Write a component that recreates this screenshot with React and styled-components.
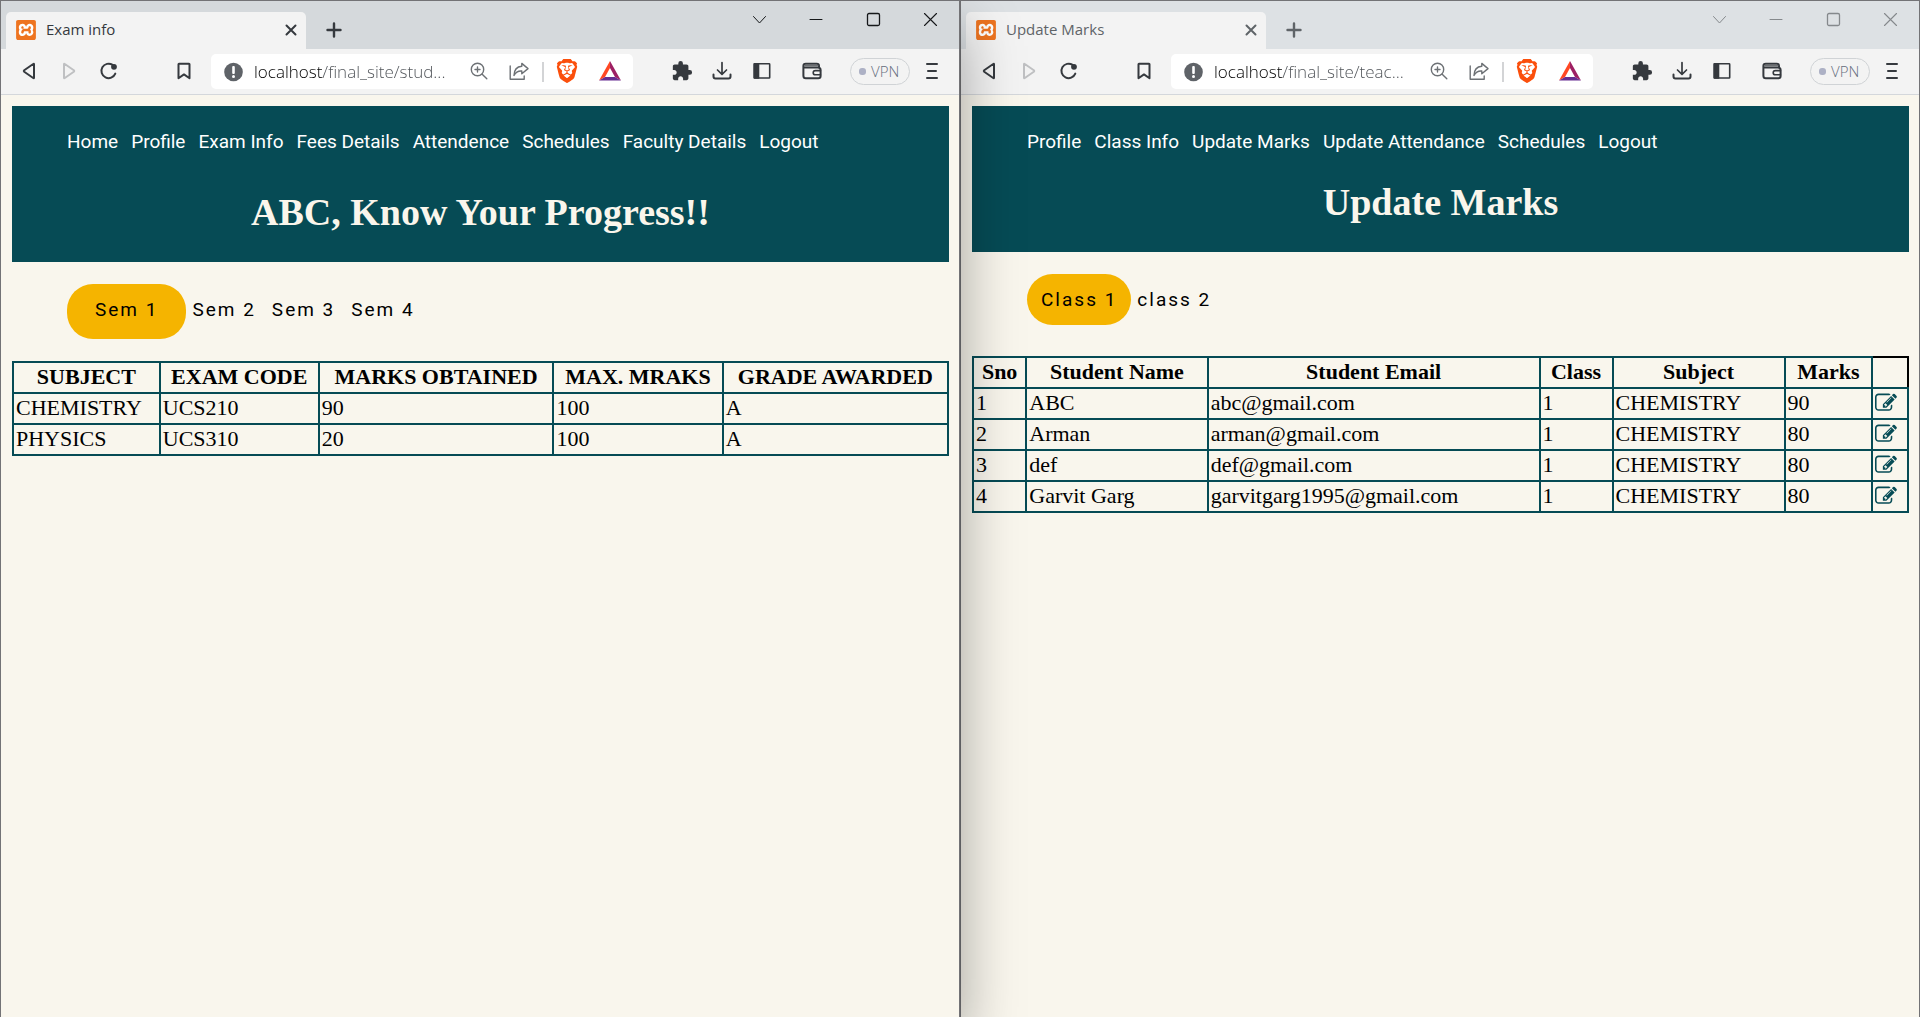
import React from 'react';
import styled, { createGlobalStyle, css } from 'styled-components';
import { SiBrave, SiXampp } from 'react-icons/si';
import { MdExtension } from 'react-icons/md';

const teal = '#064b55';
const cream = '#f9f6ed';
const ink = '#35393e';
const uiFont = '"Open Sans", "Noto Sans", sans-serif';
const serif = '"Liberation Serif", "Times New Roman", serif';

const GlobalStyle = createGlobalStyle`
  *, *::before, *::after { box-sizing: border-box; }
  body { margin: 0; background: ${cream}; font-family: ${serif}; }
  button { margin: 0; padding: 0; border: 0; background: none; color: inherit; font: inherit; cursor: pointer; }
  svg { display: block; flex: none; }
`;

const Desktop = styled.div`
  display: grid;
  grid-template-columns: 1fr 1fr;
  min-height: 100vh;
  overflow: hidden;
`;

const Window = styled.section`
  position: relative;
  z-index: ${(p) => (p.$focused ? 1 : 0)};
  display: flex;
  flex-direction: column;
  min-width: 0;
  border: 1px solid #737376;
  border-bottom: 0;
  background: ${cream};
  box-shadow: ${(p) => (p.$focused ? '0 26px 56px rgba(0, 0, 0, 0.36)' : 'none')};
`;

const TabStrip = styled.div`
  display: flex;
  align-items: flex-end;
  height: 48px;
  padding-left: 5px;
  background: ${(p) => (p.$focused ? '#d5d9dc' : '#dde1e4')};
  color: ${(p) => (p.$focused ? ink : '#5f6468')};
  font-family: ${uiFont};
`;

const BrowserTab = styled.div`
  display: flex;
  align-items: center;
  width: 300px;
  height: 37px;
  padding: 0 5px 1px 10px;
  border-radius: 5px 5px 0 0;
  background: #f3f3f3;
`;

const Favicon = styled.span`
  display: block;
  border-radius: 3px;
  background: #fff;
  color: #ee7420;
`;

const TabTitle = styled.span`
  flex: 1;
  padding: 0 0 2px 10px;
  font-size: 15px;
  line-height: 20px;
`;

const IconButton = styled.button`
  && {
    display: flex;
    flex: none;
    align-items: center;
    justify-content: center;
    width: ${(p) => p.$width || 40}px;
    height: ${(p) => p.$height || 35}px;
    padding-bottom: ${(p) => (p.$height ? 0 : 1)}px;
    color: ${(p) => p.$color || 'inherit'};
  }
`;

const NewTabButton = styled(IconButton)`
  && {
    margin-left: 14px;
  }
`;

const WindowControls = styled.div`
  display: flex;
  align-self: flex-start;
  margin-left: auto;
  color: ${(p) => (p.$focused ? '#16181a' : '#85898c')};
`;

const Toolbar = styled.div`
  display: flex;
  align-items: center;
  height: 46px;
  padding: 0 12px 0 8px;
  border-bottom: 1px solid #d4d7db;
  background: #f3f3f3;
  color: ${ink};
  font-family: ${uiFont};
`;

const NavButtons = styled.div`
  display: flex;
  margin-right: 35px;
`;

const AddressBar = styled.div`
  display: flex;
  flex: 1;
  align-items: center;
  min-width: 0;
  height: 35px;
  margin: 0 29px 0 7px;
  padding: 0 3px 0 13px;
  border-radius: 5px;
  background: #fff;
  color: #6d7175;
`;

const AddressInput = styled.input`
  flex: 1;
  width: 0;
  min-width: 0;
  margin: 0 0 0 10px;
  padding: 0;
  border: 0;
  outline: 0;
  color: #4c5055;
  font-family: ${uiFont};
  font-size: 17px;
  font-weight: 300;
  line-height: 24px;
  background: linear-gradient(to right, #000 69px, #4c5055 69px);
  background-clip: text;
  -webkit-background-clip: text;
  -webkit-text-fill-color: transparent;
`;

const Divider = styled.span`
  width: 2px;
  height: 20px;
  margin: 0 3px;
  background: #d3d4d6;
`;

const ExtensionGroup = styled.div`
  display: flex;
  gap: 3px;
`;

const ToolGroup = styled.div`
  display: flex;
  margin-right: 10px;
`;

const VpnButton = styled.button`
  && {
    display: flex;
    align-items: center;
    gap: 5px;
    width: 60px;
    height: 27px;
    margin: 0 7px 0 18px;
    padding: 0 0 1px 8px;
    border: 1px solid #d0d3d6;
    border-radius: 14px;
    color: #666e7e;
    font-size: 15px;
    font-weight: 300;
    line-height: 20px;
  }
`;

const VpnDot = styled.span`
  width: 7px;
  height: 7px;
  border-radius: 3px;
  background: #adb1c5;
`;

const Page = styled.main`
  flex: 1;
  padding: 11px 10px 0 11px;
`;

const Banner = styled.header`
  padding: 21px 55px 28px;
  background: ${teal};
`;

const SiteNav = styled.nav`
  display: flex;
  gap: 13px;
  font-family: Roboto, sans-serif;
  font-size: 19px;
  line-height: 30px;
  white-space: nowrap;
`;

const NavLink = styled.a`
  color: #fff;
  text-decoration: none;
`;

const Title = styled.h1`
  margin: ${(p) => p.$space}px 0 0;
  color: #faf6ec;
  font-size: 38px;
  font-weight: 700;
  line-height: 44px;
  text-align: center;
`;

const GroupTabs = styled.div`
  display: flex;
  align-items: baseline;
  gap: 6px;
  padding: 22px 55px ${(p) => p.$below}px;
  font-family: Roboto, sans-serif;
  font-size: 19px;
  line-height: 22px;
  letter-spacing: 2px;
  color: #000;
`;

const GroupTab = styled.button`
  && {
    letter-spacing: inherit;
    ${(p) =>
      p.$active
        ? css`
            padding: ${p.$roomy ? '15px 28px 18px' : '15px 14px 14px'};
            border-radius: 26px;
            background: #f5b400;
          `
        : css`
            padding: 0 10px 0 0;
          `}
  }
`;

const DataTable = styled.table`
  width: 100%;
  border-collapse: collapse;
  table-layout: fixed;
  color: #000;
  font-size: 22px;
  line-height: 27px;
  white-space: nowrap;

  th,
  td {
    padding: 0 2px 2px;
    border: 2px solid ${teal};
  }
  td {
    text-align: left;
  }
`;

const Col = styled.col`
  width: ${(p) => p.$share}%;
`;

const BlankHead = styled.td`
  && {
    border-top-color: #000;
    border-right-color: #000;
  }
`;

const EditLink = styled.a`
  display: block;
  width: 22px;
  color: ${teal};
`;

const Stroke = ({ size = 20, width = 2, children }) => (
  <svg
    width={size}
    height={size}
    viewBox={`0 0 ${size} ${size}`}
    fill="none"
    stroke="currentColor"
    strokeWidth={width}
    strokeLinecap="round"
    strokeLinejoin="round"
    aria-hidden="true"
  >
    {children}
  </svg>
);

const InfoIcon = () => (
  <svg width="20" height="20" viewBox="0 0 20 20" aria-hidden="true">
    <circle cx="9.5" cy="10" r="9.3" fill="#5f6368" />
    <rect x="8.2" y="4" width="2.6" height="8" rx="1" fill="#fff" />
    <circle cx="9.5" cy="14.6" r="1.5" fill="#fff" />
  </svg>
);

const BatIcon = () => (
  <svg width="22" height="20" viewBox="0 0 22 20" aria-hidden="true">
    <path d="M11 0L0 19.5L6 16L11 7Z" fill="#ff4724" />
    <path d="M11 0L22 19.5L16 16L11 7Z" fill="#9e1f63" />
    <path d="M0 19.5L6 16H16L22 19.5Z" fill="#662d91" />
  </svg>
);

const EditIcon = () => (
  <svg width="22" height="22" viewBox="0 0 1792 1792" fill="currentColor" aria-hidden="true">
    <path d="M888 1184l116-116-152-152-116 116v56h96v96h56zm440-720q-16-16-33 1l-350 350q-17 17-1 33t33-1l350-350q17-17 1-33zm80 594v190q0 119-84.5 203.5t-203.5 84.5h-832q-119 0-203.5-84.5t-84.5-203.5v-832q0-119 84.5-203.5t203.5-84.5h832q63 0 117 25 15 7 18 23 3 17-9 29l-49 49q-14 14-32 8-23-6-45-6h-832q-66 0-113 47t-47 113v832q0 66 47 113t113 47h832q66 0 113-47t47-113v-126q0-13 9-22l64-64q15-15 35-7t20 29zm-96-738l288 288-672 672h-288v-288zm444 132l-92 92-288-288 92-92q28-28 68-28t68 28l152 152q28 28 28 68t-28 68z" />
  </svg>
);

function BrowserWindow({ focused, title, url, children }) {
  return (
    <Window $focused={focused} aria-label={title}>
      <TabStrip $focused={focused}>
        <BrowserTab>
          <Favicon>
            <SiXampp size={20} />
          </Favicon>
          <TabTitle>{title}</TabTitle>
          <IconButton $width={20} $height={20} aria-label="Close tab">
            <Stroke size={12}>
              <path d="M1.5 1.5L10.5 10.5M10.5 1.5L1.5 10.5" />
            </Stroke>
          </IconButton>
        </BrowserTab>
        <NewTabButton $width={28} $height={38} aria-label="New tab">
          <Stroke size={16} width={2.4}>
            <path d="M8 1.5V14.5M1.5 8H14.5" />
          </Stroke>
        </NewTabButton>
        <WindowControls $focused={focused}>
          <IconButton $width={57} $height={37} aria-label="Search tabs">
            <Stroke size={15} width={1}>
              <path d="M1.5 4.5L7.5 11L13.5 4.5" />
            </Stroke>
          </IconButton>
          <IconButton $width={57} $height={37} aria-label="Minimize">
            <Stroke size={15} width={1}>
              <path d="M1 7.5H13" />
            </Stroke>
          </IconButton>
          <IconButton $width={57} $height={37} aria-label="Maximize">
            <Stroke size={15} width={1.3}>
              <rect x="1.5" y="1.5" width="12" height="12" rx="1.5" />
            </Stroke>
          </IconButton>
          <IconButton $width={57} $height={37} aria-label="Close">
            <Stroke size={15} width={1.1}>
              <path d="M1.5 1.5L13.5 13.5M13.5 1.5L1.5 13.5" />
            </Stroke>
          </IconButton>
        </WindowControls>
      </TabStrip>

      <Toolbar>
        <NavButtons>
          <IconButton aria-label="Back">
            <Stroke>
              <path d="M15 3.2V16.8Q15 17.6 14.2 17L5.2 10.8Q4.4 10 5.2 9.2L14.2 3Q15 2.4 15 3.2Z" />
            </Stroke>
          </IconButton>
          <IconButton aria-label="Forward" $color="#bfc0c2">
            <Stroke>
              <path d="M5 3.2V16.8Q5 17.6 5.8 17L14.8 10.8Q15.6 10 14.8 9.2L5.8 3Q5 2.4 5 3.2Z" />
            </Stroke>
          </IconButton>
          <IconButton aria-label="Reload">
            <Stroke>
              <path d="M13.6 3.9A7.2 7.2 0 1 0 16.3 12.6" />
              <circle cx="15" cy="5.8" r="1.9" fill="currentColor" />
            </Stroke>
          </IconButton>
        </NavButtons>
        <IconButton aria-label="Bookmark">
          <Stroke>
            <path d="M5 2.8H15Q15.5 2.8 15.5 3.3V17.2L10 13.4L4.5 17.2V3.3Q4.5 2.8 5 2.8Z" />
          </Stroke>
        </IconButton>
        <AddressBar>
          <InfoIcon />
          <AddressInput type="text" aria-label="Address" defaultValue={url} spellCheck={false} />
          <IconButton aria-label="Zoom">
            <Stroke size={18} width={1.4}>
              <circle cx="7.5" cy="7.5" r="6.2" />
              <path d="M12.2 12.2L16.8 16.8M7.5 5V10M5 7.5H10" />
            </Stroke>
          </IconButton>
          <IconButton aria-label="Share">
            <Stroke size={20} width={1.4}>
              <path d="M1.2 5V18.3H15.2V15" />
              <path d="M12.8 2.4L19 7.6L12.8 12.8V10Q7.5 9.6 5 14.4Q5.2 5.8 12.8 5.2Z" />
            </Stroke>
          </IconButton>
          <Divider />
          <ExtensionGroup>
            <IconButton aria-label="Brave Shields" $color="#fb4f0c">
              <SiBrave size={24} />
            </IconButton>
            <IconButton aria-label="Brave Rewards">
              <BatIcon />
            </IconButton>
          </ExtensionGroup>
        </AddressBar>
        <ToolGroup>
          <IconButton aria-label="Extensions">
            <MdExtension size={22} />
          </IconButton>
          <IconButton aria-label="Downloads">
            <Stroke>
              <path d="M10 1.5V13M5.5 9L10 13.3L14.5 9" strokeWidth="1.7" />
              <path d="M1.5 13.5V15.5Q1.5 17.5 3.5 17.5H16.5Q18.5 17.5 18.5 15.5V13.5" />
            </Stroke>
          </IconButton>
          <IconButton aria-label="Sidebar">
            <Stroke width={1.6}>
              <rect x="2.3" y="2.8" width="15.4" height="14.2" rx="0.6" />
              <path d="M2.3 2.8H6.5V17H2.3Z" fill="currentColor" />
            </Stroke>
          </IconButton>
        </ToolGroup>
        <IconButton aria-label="Wallet">
          <Stroke>
            <path d="M17 6.2V5Q17 2.7 14.7 2.7H3.8Q1.4 2.7 1.4 5V14.8Q1.4 17.3 3.8 17.3H16.2Q18.6 17.3 18.6 15V9Q18.6 6.5 16 6.5H2" />
            <path d="M3 4.6H15.5" stroke="#6d7073" strokeWidth="1.8" />
            <path d="M18.4 9.6H13.4Q11.2 9.6 11.2 11.7T13.4 13.8H18.4" strokeWidth="1.6" />
          </Stroke>
        </IconButton>
        <VpnButton>
          <VpnDot />
          VPN
        </VpnButton>
        <IconButton $width={30} aria-label="Menu">
          <Stroke size={18}>
            <path d="M4 2H14M5 9H13M4 16H14" />
          </Stroke>
        </IconButton>
      </Toolbar>
      {children}
    </Window>
  );
}

function PageHeader({ links, title, space }) {
  return (
    <Banner>
      <SiteNav>
        {links.map((link) => (
          <NavLink key={link} href="#">
            {link}
          </NavLink>
        ))}
      </SiteNav>
      <Title $space={space}>{title}</Title>
    </Banner>
  );
}

function Groups({ items, below, roomy }) {
  return (
    <GroupTabs $below={below}>
      {items.map((item, i) => (
        <GroupTab key={item} $active={i === 0} $roomy={roomy}>
          {item}
        </GroupTab>
      ))}
    </GroupTabs>
  );
}

function Table({ columns, rows, editable }) {
  return (
    <DataTable>
      <colgroup>
        {columns.map(([name, share]) => (
          <Col key={name} $share={share} />
        ))}
        {editable && <Col $share={3.8} />}
      </colgroup>
      <thead>
        <tr>
          {columns.map(([name]) => (
            <th key={name} scope="col">
              {name}
            </th>
          ))}
          {editable && <BlankHead />}
        </tr>
      </thead>
      <tbody>
        {rows.map((row) => (
          <tr key={row.join()}>
            {row.map((cell, i) => (
              <td key={i}>{cell}</td>
            ))}
            {editable && (
              <td>
                <EditLink href="#" aria-label={`Edit ${row[1]}`}>
                  <EditIcon />
                </EditLink>
              </td>
            )}
          </tr>
        ))}
      </tbody>
    </DataTable>
  );
}

const studentLinks = ['Home', 'Profile', 'Exam Info', 'Fees Details', 'Attendence', 'Schedules', 'Faculty Details', 'Logout'];
const teacherLinks = ['Profile', 'Class Info', 'Update Marks', 'Update Attendance', 'Schedules', 'Logout'];

const examColumns = [
  ['SUBJECT', 15.7],
  ['EXAM CODE', 17],
  ['MARKS OBTAINED', 25.1],
  ['MAX. MRAKS', 18.1],
  ['GRADE AWARDED', 24.1],
];
const examRows = [
  ['CHEMISTRY', 'UCS210', '90', '100', 'A'],
  ['PHYSICS', 'UCS310', '20', '100', 'A'],
];

const marksColumns = [
  ['Sno', 5.7],
  ['Student Name', 19.4],
  ['Student Email', 35.5],
  ['Class', 7.8],
  ['Subject', 18.4],
  ['Marks', 9.4],
];
const marksRows = [
  ['1', 'ABC', 'abc@gmail.com', '1', 'CHEMISTRY', '90'],
  ['2', 'Arman', 'arman@gmail.com', '1', 'CHEMISTRY', '80'],
  ['3', 'def', 'def@gmail.com', '1', 'CHEMISTRY', '80'],
  ['4', 'Garvit Garg', 'garvitgarg1995@gmail.com', '1', 'CHEMISTRY', '80'],
];

export default function App() {
  return (
    <>
      <GlobalStyle />
      <Desktop>
        <BrowserWindow focused title="Exam info" url="localhost/final_site/stud...">
          <Page>
            <PageHeader links={studentLinks} title="ABC, Know Your Progress!!" space={33} />
            <Groups items={['Sem 1', 'Sem 2', 'Sem 3', 'Sem 4']} below={22} roomy />
            <Table columns={examColumns} rows={examRows} />
          </Page>
        </BrowserWindow>
        <BrowserWindow title="Update Marks" url="localhost/final_site/teac...">
          <Page>
            <PageHeader links={teacherLinks} title="Update Marks" space={23} />
            <Groups items={['Class 1', 'class 2']} below={31} />
            <Table columns={marksColumns} rows={marksRows} editable />
          </Page>
        </BrowserWindow>
      </Desktop>
    </>
  );
}
